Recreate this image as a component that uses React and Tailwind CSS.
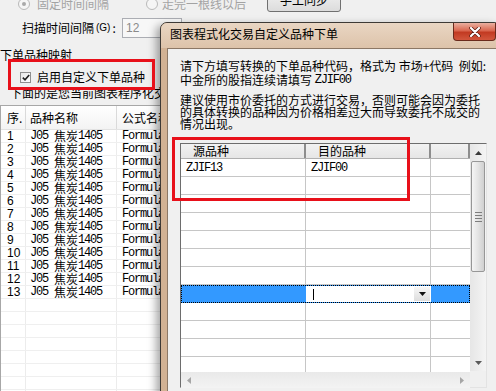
import React from "react";

const mono = "font-['Liberation_Mono','Noto_Sans_CJK_SC',monospace] tracking-[-1.2px] whitespace-pre";

function Radio({ checked }) {
  return (
    <span className="w-[12px] h-[12px] rounded-full border border-[#b9b9b9] bg-[#f5f5f5] flex items-center justify-center">
      {checked && <span className="w-[4px] h-[4px] rounded-full bg-[#a9a9a9]" />}
    </span>
  );
}

function Tri({ dir, color }) {
  const pts = {
    up: "0,4 3.5,0 7,4",
    down: "0,0 7,0 3.5,4",
    left: "4,0 4,7 0,3.5",
    right: "0,0 0,7 4,3.5",
  }[dir];
  const vert = dir === "up" || dir === "down";
  return (
    <svg width={vert ? 7 : 4} height={vert ? 4 : 7} viewBox={vert ? "0 0 7 4" : "0 0 4 7"}>
      <polygon points={pts} fill={color} />
    </svg>
  );
}

export default function App() {
  const leftRows = Array.from({ length: 21 }, (_, i) => i);
  const gridRows = Array.from({ length: 12 }, (_, i) => i);
  return (
    <div className="relative w-[496px] h-[391px] overflow-hidden bg-[#f0f0f0] text-[12px] leading-[12px] text-black font-['Noto_Sans_CJK_SC',sans-serif]">
      {/* background window */}
      <div className="flex flex-col">
        <div className="-mt-[4px] h-[16px] flex items-center text-[#a3a3a3] whitespace-nowrap">
          <div className="ml-[18px]"><Radio checked /></div>
          <span className="ml-[7px]">固定时间间隔</span>
          <div className="ml-[37px]"><Radio /></div>
          <span className="ml-[4px]">走完一根线以后</span>
          <div className="ml-[21px] self-end h-[24px] w-[74px] shrink-0 rounded-[3px] border border-[#707070] bg-[linear-gradient(180deg,#f4f4f4,#dcdcdc)] flex items-center justify-center text-black">
            手工同步
          </div>
        </div>

        <div className="mt-[6px] h-[20px] flex items-center">
          <span className="ml-[22px] w-[100px] whitespace-nowrap flex items-center">
            扫描时间间隔<span className="text-[10px] font-['Liberation_Sans'] mx-[2px]">(G)</span>:
          </span>
          <div className="w-[60px] h-[20px] border border-[#abadb3] bg-[#f7f7f7] flex items-center pl-[3px] text-[#8a8a8a] font-['Liberation_Sans']">
            12
          </div>
        </div>

        <div className="mt-[11px] h-[12px] whitespace-nowrap">下单品种映射</div>

        <div className="mt-[9px] h-[14px] flex items-center whitespace-nowrap">
          <div className="ml-[20px] w-[11px] h-[11px] border border-[#8f8f8f] bg-[linear-gradient(135deg,#e6e6e6,#ffffff)] flex items-center justify-center">
            <svg width="8" height="7" viewBox="0 0 8 7">
              <path d="M0.8 3.6 L3 5.8 L7.2 0.9" stroke="#1f1f1f" strokeWidth="1.6" fill="none" />
            </svg>
          </div>
          <span className="ml-[6px]">启用自定义下单品种</span>
        </div>

        <div className="mt-[3px] h-[12px] ml-[10px] whitespace-nowrap">下面的是您当前图表程序化交易的品种</div>

        {/* left table */}
        <div className="mt-[6px] border-l border-t border-[#a7a7a7] bg-white flex flex-col">
          <div className="h-[24px] flex border-b border-[#e2e2e2] bg-[linear-gradient(180deg,#ffffff,#f3f3f3)]">
            <div className="w-[25px] border-r border-[#dadada] pl-[6px] flex items-center">序.</div>
            <div className="w-[91px] border-r border-[#dadada] pl-[4px] flex items-center">品种名称</div>
            <div className="flex-1 pl-[5px] flex items-center whitespace-nowrap">公式名称</div>
          </div>
          {leftRows.map((i) => (
            <div key={i} className="h-[13px] flex border-b border-[#efefef] whitespace-nowrap">
              <div className="w-[25px] border-r border-[#ececec] pl-[6px] flex items-center font-['Liberation_Sans']">
                {i < 13 ? i + 1 : ""}
              </div>
              <div className="w-[91px] border-r border-[#ececec] pl-[4px] flex items-center">
                {i < 13 && (
                  <>
                    <span className={mono}>{"J05 "}</span>
                    <span>焦炭</span>
                    <span className={mono}>1405</span>
                  </>
                )}
              </div>
              <div className={"flex-1 pl-[5px] flex items-center " + mono}>{i < 13 ? "Formula1" : ""}</div>
            </div>
          ))}
        </div>
      </div>

      {/* dialog window */}
      <div className="absolute left-[160px] top-[22px] w-[341px] h-[380px] rounded-t-[7px] border border-[#3e3a36] bg-[#d2b294] shadow-[-4px_3px_8px_rgba(0,0,0,0.35)] flex flex-col">
        <div className="h-[25px] shrink-0 flex items-start rounded-t-[6px] bg-[linear-gradient(180deg,#e9d6c3,#ddc3aa)]">
          <span className="ml-[9px] mt-[5px] whitespace-nowrap">图表程式化交易自定义品种下单</span>
          <div className="ml-auto mr-[4px] w-[43px] h-[18px] rounded-b-[4px] border border-t-0 border-[#6a2a1c] bg-[linear-gradient(180deg,#eab0a0_0%,#d9664f_45%,#c23a22_55%,#d2563d_100%)] flex items-center justify-center">
            <svg width="12" height="10" viewBox="0 0 12 10">
              <path d="M2 1 L10 9 M10 1 L2 9" stroke="#5a1a10" strokeWidth="3.6" strokeLinecap="round" />
              <path d="M2 1 L10 9 M10 1 L2 9" stroke="#ffffff" strokeWidth="2.2" strokeLinecap="round" />
            </svg>
          </div>
        </div>

        <div className="flex-1 ml-[6px] border-l border-t border-[#8c7866] bg-[#f0f0f0] flex flex-col">
          <div className="pl-[12px] pt-[11px] flex flex-col">
            <div className="h-[13px] whitespace-pre">请下方填写转换的下单品种代码，格式为 市场+代码  例如:</div>
            <div className="h-[13px] whitespace-pre flex items-center">
              中金所的股指连续请填写 <span className={mono}>ZJIF00</span>
            </div>
            <div className="mt-[8px] leading-[12px] whitespace-nowrap">
              <div>建议使用市价委托的方式进行交易，否则可能会因为委托</div>
              <div>的具体转换的品种因为价格相差过大而导致委托不成交的</div>
              <div>情况出现。</div>
            </div>

            {/* grid */}
            <div className="mt-[13px] w-[307px] h-[245px] border border-[#6d6d6d] border-r-[#e3e3e3] border-b-[#e3e3e3] flex bg-white">
              <div className="w-[289px] flex flex-col">
                <div className="h-[15px] shrink-0 flex bg-[linear-gradient(180deg,#f2f2f2,#e6e6e6)] border-b border-[#b0b0b0] whitespace-nowrap">
                  <div className="w-[125px] border-r-2 border-[#8d8d8d] pl-[12px] flex items-center">源品种</div>
                  <div className="w-[125px] border-r-2 border-[#8d8d8d] pl-[12px] flex items-center">目的品种</div>
                  <div className="flex-1 border-r-2 border-[#8d8d8d]" />
                </div>
                <div className="h-[213px] shrink-0 overflow-hidden flex flex-col">
                  {gridRows.map((i) =>
                    i === 7 ? (
                      <div key={i} className="h-[18px] shrink-0 flex border border-dotted border-black bg-[#3399ff]">
                        <div className="w-[124px]" />
                        <div className="w-[125px] bg-white flex items-center">
                          <div className="ml-[7px] w-px h-[11px] bg-black" />
                          <div className="ml-auto mr-px h-[14px] w-[16px] bg-[linear-gradient(180deg,#f7f7f7,#dddddd)] flex items-center justify-center">
                            <Tri dir="down" color="#111111" />
                          </div>
                        </div>
                        <div className="flex-1" />
                      </div>
                    ) : (
                      <div key={i} className="h-[18px] shrink-0 flex border-b border-[#c6c6c6]">
                        <div className={"w-[125px] border-r border-[#c6c6c6] pl-[5px] flex items-center " + mono}>
                          {i === 0 ? "ZJIF13" : ""}
                        </div>
                        <div className={"w-[125px] border-r border-[#c6c6c6] pl-[5px] flex items-center " + mono}>
                          {i === 0 ? "ZJIF00" : ""}
                        </div>
                        <div className="flex-1" />
                      </div>
                    )
                  )}
                </div>
                <div className="h-[16px] shrink-0 bg-[linear-gradient(180deg,#e9e9e9,#f3f3f3)] flex items-center justify-between px-[6px]">
                  <Tri dir="left" color="#a6a6a6" />
                  <Tri dir="right" color="#a6a6a6" />
                </div>
              </div>
              <div className="w-[16px] flex flex-col">
                <div className="h-[228px] flex flex-col items-center bg-[linear-gradient(90deg,#e6e6e6,#f4f4f4)]">
                  <div className="h-[17px] w-full flex items-center justify-center">
                    <Tri dir="up" color="#3a3a3a" />
                  </div>
                  <div className="h-[111px] w-[14px] rounded-[2px] border border-[#979797] bg-[linear-gradient(90deg,#f5f5f5,#e4e4e4_50%,#d0d0d0)] flex flex-col items-center justify-center gap-[2px]">
                    <div className="w-[7px] h-px bg-[#7d7d7d]" />
                    <div className="w-[7px] h-px bg-[#7d7d7d]" />
                    <div className="w-[7px] h-px bg-[#7d7d7d]" />
                    <div className="w-[7px] h-px bg-[#7d7d7d]" />
                  </div>
                  <div className="mt-auto h-[17px] w-full flex items-center justify-center">
                    <Tri dir="down" color="#5a5a5a" />
                  </div>
                </div>
                <div className="h-[16px] bg-[#f0f0f0]" />
              </div>
            </div>
          </div>
        </div>
      </div>

      {/* red annotation boxes */}
      <div className="absolute left-[8px] top-[59px] w-[147px] h-[31px] border-[3px] border-[#e8101a]" />
      <div className="absolute left-[172px] top-[137px] w-[238px] h-[64px] border-[3px] border-[#e8101a]" />
    </div>
  );
}
